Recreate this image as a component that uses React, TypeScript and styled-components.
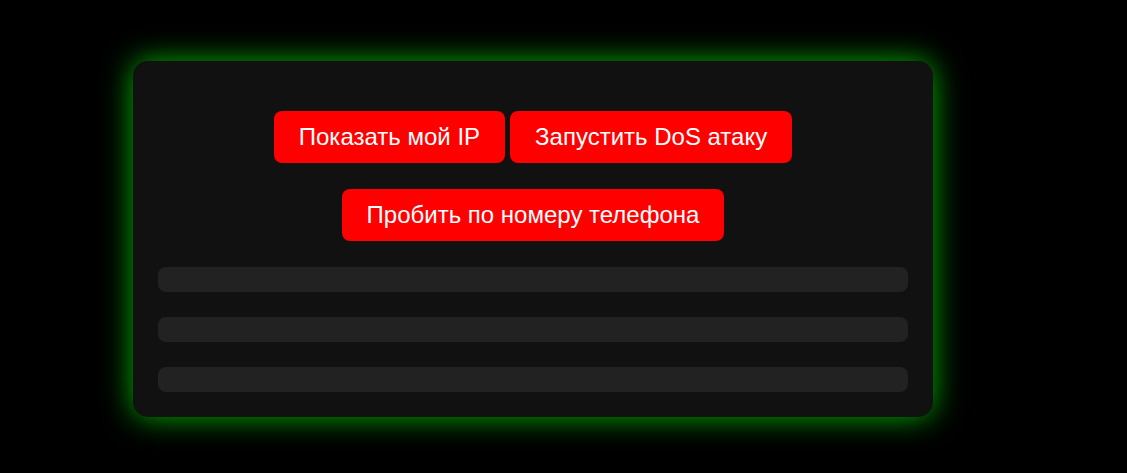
import React from "react";
import styled, { createGlobalStyle } from "styled-components";

const Global = createGlobalStyle`
  html, body { margin: 0; padding: 0; background: #000; }
  body { font-family: "Liberation Sans", Arial, sans-serif; }
`;

const Page = styled.div`
  min-height: 100vh;
  box-sizing: border-box;
  padding: 61px 0 56px 133px;
`;

const Card = styled.div`
  width: 800px;
  box-sizing: border-box;
  background: #111;
  border-radius: 15px;
  box-shadow: 0 0 30px rgba(0, 255, 0, 0.7);
  padding: 50px 25px 25px;
  display: flex;
  flex-direction: column;
  gap: 26px;
`;

const Row = styled.div`
  display: flex;
  justify-content: center;
  gap: 5px;
`;

const Button = styled.button`
  background: #f00;
  color: #fff;
  border: none;
  border-radius: 8px;
  font-family: "Liberation Sans", Arial, sans-serif;
  font-size: 24px;
  line-height: 26px;
  height: 52px;
  padding: 0 25px;
  cursor: pointer;
`;

const Bars = styled.div`
  display: flex;
  flex-direction: column;
  gap: 25px;
`;

const Bar = styled.div`
  height: 25px;
  background: #222;
  border-radius: 8px;
`;

export default function App() {
  return (
    <>
      <Global />
      <Page>
        <Card>
          <Row>
            <Button>Показать мой IP</Button>
            <Button>Запустить DoS атаку</Button>
          </Row>
          <Row>
            <Button>Пробить по номеру телефона</Button>
          </Row>
          <Bars>
            <Bar />
            <Bar />
            <Bar />
          </Bars>
        </Card>
      </Page>
    </>
  );
}
